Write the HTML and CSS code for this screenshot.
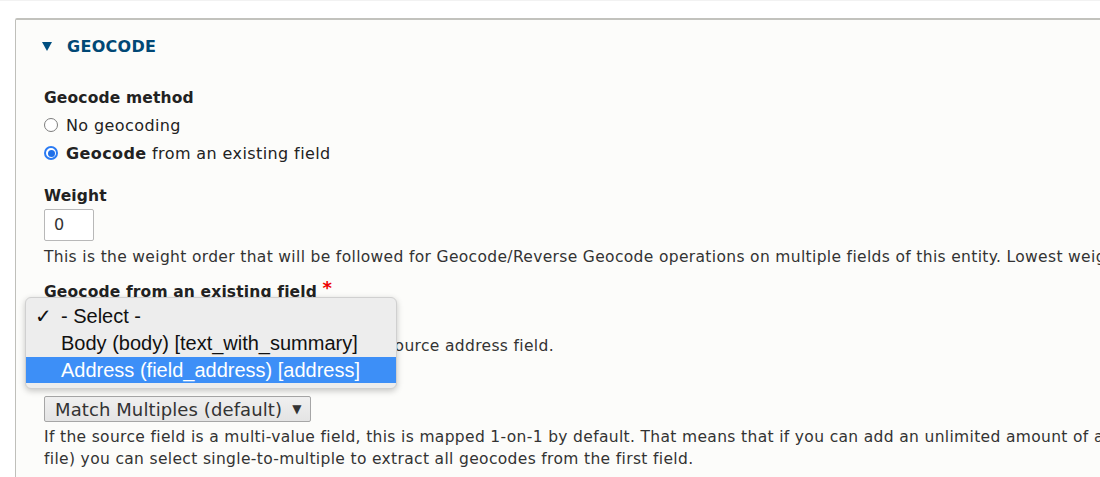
FILE: index.html
```html
<!DOCTYPE html>
<html>
<head>
<meta charset="utf-8">
<link rel="stylesheet" href="styles.css">
</head>
<body>
<div class="page">
  <div class="fieldset">
    <div class="summary">
      <span class="tri"></span>
      <span class="summary-text">GEOCODE</span>
    </div>
    <div class="wrapper">
      <div class="item">
        <div class="label">Geocode method</div>
        <label class="radio"><span class="rb"></span>No geocoding</label>
        <label class="radio"><span class="rb checked"></span><b>Geocode</b>&nbsp;from an existing field</label>
      </div>
      <div class="item weight">
        <div class="label">Weight</div>
        <div class="textbox">0</div>
        <div class="desc">This is the weight order that will be followed for Geocode/Reverse Geocode operations on multiple fields of this entity. Lowest weight will be processed first.</div>
      </div>
      <div class="item field">
        <div class="label">Geocode from an existing field <span class="req">*</span></div>
        <div class="select hidden-select">- Select - <span class="arrow">▼</span></div>
        <div class="desc">Select the field you would like to use as a source address field.</div>
      </div>
      <div class="item multi">
        <div class="label">Multi-value input handling</div>
        <div class="select">Match Multiples (default) <span class="arrow">▼</span></div>
        <div class="desc">If the source field is a multi-value field, this is mapped 1-on-1 by default. That means that if you can add an unlimited amount of addresses to one target field (e.g. a user pro-<br>file) you can select single-to-multiple to extract all geocodes from the first field.</div>
      </div>
    </div>
    <div class="popup">
      <div class="opt"><span class="check">✓</span>- Select -</div>
      <div class="opt">Body (body) [text_with_summary]</div>
      <div class="opt active">Address (field_address) [address]</div>
    </div>
  </div>
</div>
</body>
</html>
```

FILE: styles.css
```css
html, body {
  margin: 0;
  padding: 0;
  background: #ffffff;
  overflow: hidden;
  width: 1100px;
  height: 477px;
}
.page {
  padding-top: 17px;
  padding-left: 15px;
  border-top: 1px solid #f2f2f2;
}
.fieldset {
  position: relative;
  width: 1200px;
  height: 520px;
  border: 1px solid #bfbfba;
  border-top-width: 2px;
  border-top-color: #c2c2bd;
  border-radius: 2px 0 0 0;
  background: #fcfcfa;
  font-family: "DejaVu Sans", sans-serif;
  color: #333;
}
.summary {
  display: flex;
  align-items: center;
  height: 20px;
  margin-top: 16px;
  padding-left: 26px;
  color: #004875;
  font-weight: bold;
  font-size: 16px;
  letter-spacing: 0.3px;
}
.tri {
  width: 0;
  height: 0;
  border-left: 5px solid transparent;
  border-right: 5px solid transparent;
  border-top: 9px solid #004f80;
  margin-right: 15px;
  margin-top: 1px;
}
.wrapper {
  padding: 32px 0 0 28px;
}
.label {
  font-weight: bold;
  color: #222;
  line-height: 20px;
  height: 20px;
  font-size: 15.5px;
  letter-spacing: 0.15px;
  white-space: nowrap;
}
.radio {
  display: flex;
  align-items: center;
  height: 28px;
  font-size: 16px;
  letter-spacing: 0.4px;
  color: #222;
}
.radio:first-of-type {
  margin-top: 3px;
}
.radio b {
  font-weight: bold;
}
.rb {
  flex: none;
  width: 14px;
  height: 14px;
  border-radius: 50%;
  border: 1px solid #7d7d7d;
  background: #fff;
  box-sizing: border-box;
  margin-right: 8px;
  position: relative;
}
.rb.checked {
  border: 2px solid #2a7bf3;
  background: #fff;
}
.rb.checked::after {
  content: "";
  position: absolute;
  left: 1.5px;
  top: 1.5px;
  width: 7px;
  height: 7px;
  border-radius: 50%;
  background: #1f6fe8;
}
.item.weight {
  margin-top: 19px;
}
.textbox {
  width: 50px;
  height: 32px;
  border: 1px solid #b8b8b8;
  border-radius: 2px;
  box-sizing: border-box;
  background: #fff;
  line-height: 30px;
  padding-left: 9px;
  margin-top: 3px;
  font-size: 16px;
  color: #333;
}
.desc {
  font-size: 15.5px;
  letter-spacing: 0.34px;
  color: #333;
  line-height: 22px;
  margin-top: 5px;
  white-space: nowrap;
}
.item.field {
  margin-top: 13px;
}
.req {
  color: #e00;
  font-size: 18px;
  position: relative;
  top: -3px;
}
.select {
  display: inline-flex;
  align-items: center;
  height: 26px;
  box-sizing: border-box;
  border: 1px solid #a6a6a6;
  border-radius: 2px;
  background: linear-gradient(#f0f0f0, #e4e4e4);
  padding: 0 9px 0 10px;
  font-size: 18px;
  letter-spacing: 0.1px;
  color: #333;
}
.select .arrow {
  font-size: 12px;
  margin-left: 10px;
  color: #333;
}
.hidden-select {
  margin-top: 4px;
}
.item.field .desc {
  margin-top: 4px;
}
.item.multi {
  margin-top: 11px;
}
.item.multi .select {
  margin-top: 8px;
}
.item.multi .desc {
  margin-top: 4px;
}
.popup {
  position: absolute;
  left: 9px;
  top: 277px;
  width: 372px;
  background: #ededed;
  border: 1px solid #d0d0d0;
  border-radius: 6px;
  box-sizing: border-box;
  box-shadow: 0 2px 6px rgba(0,0,0,0.22);
  padding: 5px 0 5px 0;
  font-family: "Liberation Sans", sans-serif;
  font-size: 20px;
  color: #111;
}
.opt {
  height: 27px;
  line-height: 27px;
  padding-left: 35px;
  position: relative;
}
.opt.active {
  background: #3d8ff7;
  color: #fff;
  height: 26px;
  line-height: 26px;
}
.check {
  position: absolute;
  left: 9px;
  top: 0;
  font-size: 20px;
  font-weight: bold;
  font-family: "DejaVu Sans", sans-serif;
}
```
